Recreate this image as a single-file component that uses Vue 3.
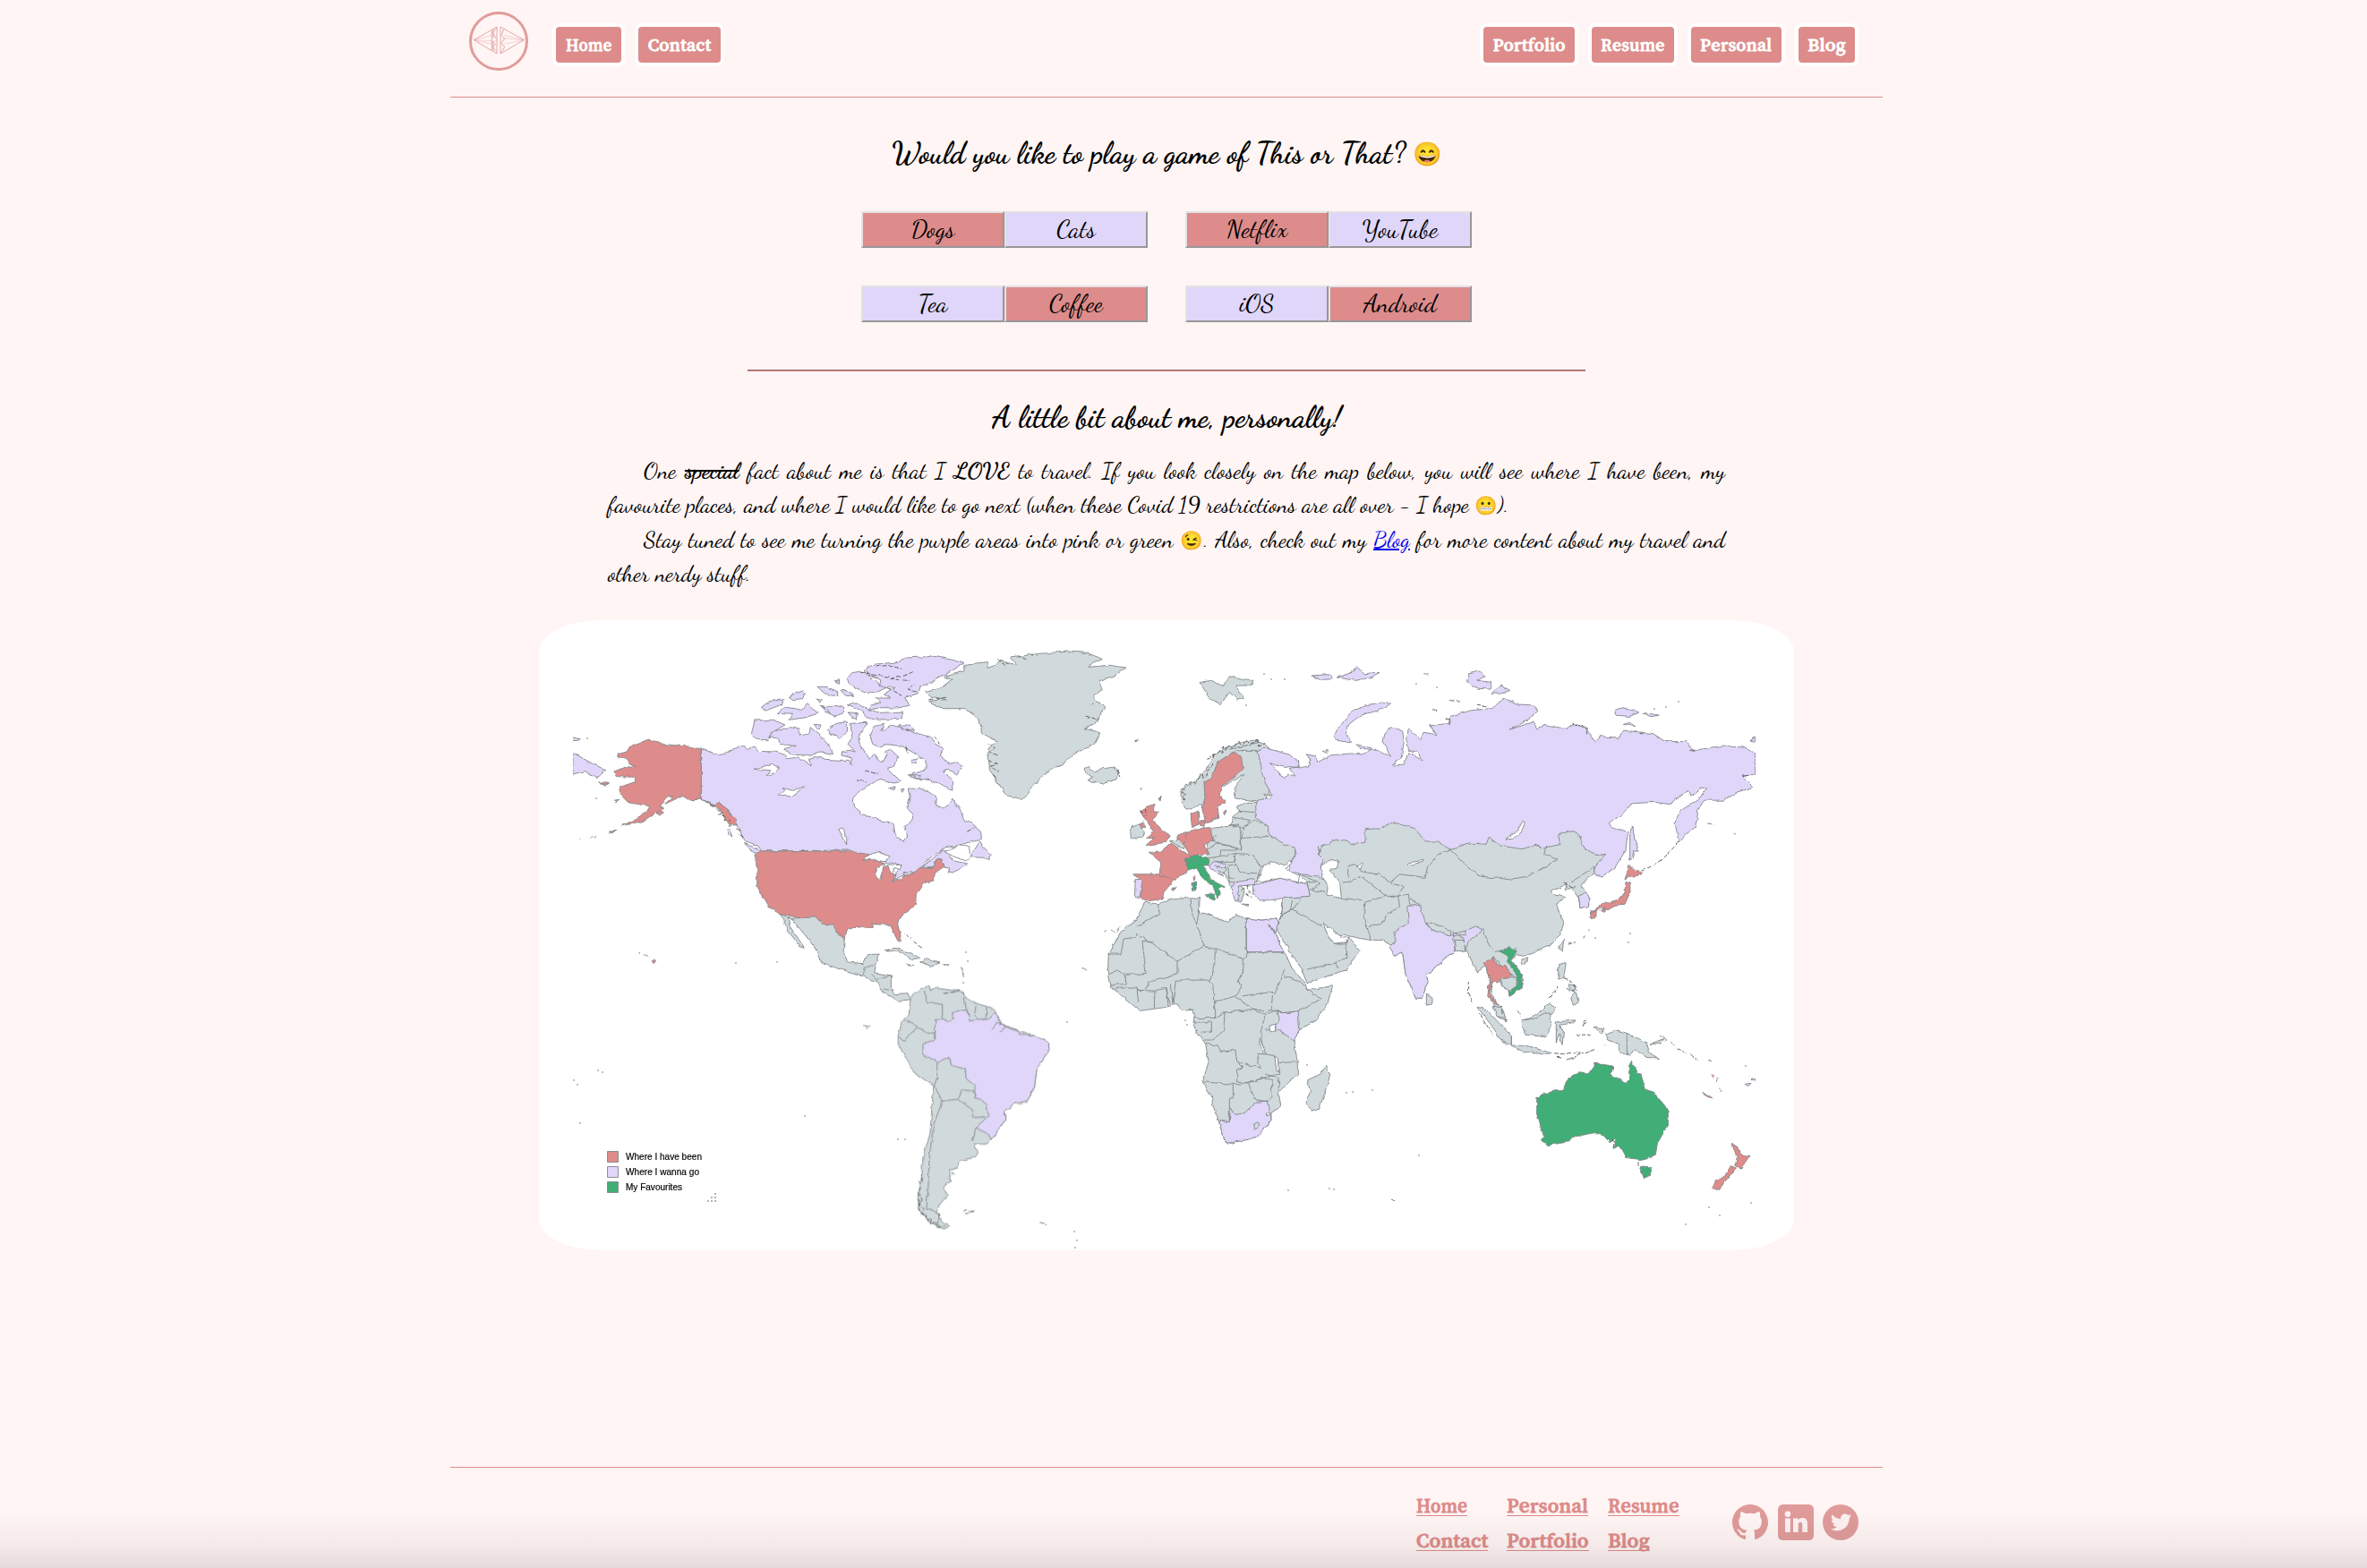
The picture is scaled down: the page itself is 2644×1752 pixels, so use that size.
<script setup>
const leftNav = [
  { label: 'Home', box: 81, text: 52 },
  { label: 'Contact', box: 100, text: 71 },
]
const rightNav = [
  { label: 'Portfolio', box: 110, text: 81 },
  { label: 'Resume', box: 100, text: 72 },
  { label: 'Personal', box: 109, text: 80 },
  { label: 'Blog', box: 71, text: 43 },
]
const choices = [
  [{ label: 'Dogs', picked: true }, { label: 'Cats' }],
  [{ label: 'Netflix', picked: true }, { label: 'YouTube' }],
  [{ label: 'Tea' }, { label: 'Coffee', picked: true }],
  [{ label: 'iOS' }, { label: 'Android', picked: true }],
]
const footerLinks = [
  [{ label: 'Home', w: 57 }, { label: 'Contact', w: 80 }],
  [{ label: 'Personal', w: 91 }, { label: 'Portfolio', w: 92 }],
  [{ label: 'Resume', w: 80 }, { label: 'Blog', w: 47 }],
]

// Condenses or widens a run of text to a set width.
const vFit = {
  mounted(el, { value }) {
    const natural = el.offsetWidth
    el.style.transform = `scaleX(${value / natural})`
    el.style.marginRight = `${value - natural}px`
  },
}

const americas = [
  ['want', 'M513 441L536 448 566 458 590 452 610 442 650 428 660 440 680 432 690 448 740 450 775 460 785 473 815 468 840 482 858 495 850 475 885 466 900 475 945 478 975 478 985 495 980 470 952 462 955 450 975 445 995 450 972 425 985 400 980 355 1033 352 1015 385 1005 400 1008 420 1020 440 1040 475 1055 455 1065 480 1085 485 1095 460 1085 450 1105 442 1128 465 1115 500 1095 505 1138 550 1115 555 1070 540 1045 555 1010 580 988 605 993 635 1010 650 1010 662 1060 670 1085 685 1115 692 1120 730 1145 750 1155 735 1148 700 1172 680 1176 660 1158 640 1165 600 1160 573 1205 575 1235 590 1250 605 1248 630 1272 642 1285 630 1298 605 1325 650 1335 680 1360 690 1388 715 1390 745 1365 750 1310 765 1275 770 1250 790 1200 835 1225 820 1265 782 1300 783 1290 800 1300 815 1345 825 1300 855 1285 852 1290 840 1275 838 1265 810 1250 808 1240 835 1195 838 1175 855 1145 862 1150 870 1110 884 1125 850 1140 830 1120 825 1090 820 1095 800 1070 785 1045 795 1010 790 985 780 703 783 690 765 650 750 635 715 620 690 600 650 570 620 555 630 513 610Z'],
  ['want', 'M1355 800L1385 750 1392 765 1420 795 1415 812 1395 802ZM648 758L690 775 703 792 680 786 655 770ZM592 708L605 708 612 735 600 730Z'],
  ['want', 'M1040 395L1050 365 1085 358 1075 380 1095 370 1110 360 1160 375 1180 385 1230 400 1240 420 1270 440 1260 460 1285 490 1320 485 1330 500 1312 528 1285 508 1270 515 1300 545 1302 580 1265 560 1230 545 1185 540 1175 525 1215 510 1215 480 1180 455 1140 430 1090 425 1075 435 1050 425ZM1130 360L1165 360 1180 378 1140 375ZM1168 475L1190 472 1188 488 1172 485ZM1160 530L1200 530 1190 542ZM1102 572L1118 566 1112 578ZM1138 576L1148 574 1142 586Z'],
  ['want', 'M680 345L740 343 775 360 735 385 720 410 690 410 670 395ZM725 400L745 380 790 368 820 372 822 395 850 390 855 368 890 400 920 440 925 458 890 450 860 462 800 460 770 440 810 430 765 425 750 405ZM865 358L888 360 882 375ZM908 375L935 355 970 350 970 385 945 405 920 390Z'],
  ['want', 'M700 305L730 280 770 275 765 292 720 310ZM753 322L775 300 830 310 845 290 860 305 880 320 840 335 790 343 800 325ZM785 265L830 245 838 255 830 272 800 275ZM876 232L905 232 940 248 940 265 900 255ZM888 295L910 300 935 292 960 300 958 322 930 330 900 315ZM950 245L970 245 990 262 965 262ZM970 290L1000 288 1020 300 1060 320 1145 315 1140 340 1060 342 1030 335 1010 310ZM975 318L1000 320 998 340 980 335ZM932 212L945 210 945 220ZM872 270L888 275 885 285Z'],
  ['want', 'M970 205L985 185 1015 180 1045 198 1060 215 1090 235 1065 250 1030 250 1000 238 975 220ZM1020 175L1055 157 1120 150 1155 135 1240 130 1290 140 1335 153 1295 180 1270 195 1235 215 1195 232 1190 255 1150 268 1165 295 1130 303 1070 302 1040 310 1045 290 1075 285 1060 270 1105 270 1085 255 1120 235 1070 230 1075 210 1040 190Z'],
  ['want', 'M112 453L165 485 215 512 185 540 150 515 112 525ZM112 402L138 407 130 412 112 413Z'],
  ['been', 'M513 441L480 433 400 425 350 408 320 422 290 433 280 450 252 458 252 468 275 470 290 490 310 502 280 500 238 517 250 533 305 535 308 550 260 568 258 590 285 620 348 632 345 650 320 670 265 698 330 683 375 652 400 640 385 632 410 598 425 600 400 625 450 600 470 612 513 610 550 630 570 640 600 697 626 695 622 675 570 620 555 630 513 610Z'],
  ['been', 'M372 655L390 645 395 658 380 664ZM192 552L225 556 215 562ZM242 612L260 610 250 617ZM225 720L250 710 235 722ZM164 737L175 735M178 738L188 735M132 742L135 742M356 1148L364 1146 370 1154 362 1160ZM335 1130L352 1137M320 1123L324 1124'],
  ['been', 'M703 783L985 783 1010 790 1040 797 1018 815 1050 808 1090 825 1062 840 1063 875 1075 880 1080 840 1100 828 1110 860 1120 865 1115 880 1150 868 1180 855 1195 838 1240 838 1250 808 1265 810 1275 838 1245 855 1240 882 1210 890 1185 935 1183 965 1130 1010 1128 1030 1140 1080 1130 1088 1112 1050 1105 1030 1045 1028 1050 1040 1000 1035 965 1050 962 1075 945 1070 925 1035 905 1038 870 1007 830 1010 785 998 760 995 725 970 705 935 688 900 688 820 680 795Z'],
  ['land', 'M760 995L800 1008 870 1005 905 1035 925 1030 945 1065 962 1075 958 1120 970 1155 1020 1160 1035 1130 1070 1128 1060 1165 1055 1190 1107 1200 1107 1240 1118 1265 1162 1262 1172 1280 1129 1285 1079 1255 1063 1220 1016 1202 985 1190 920 1170 880 1150 880 1125 850 1080 800 1015 785 1005 790 1035 835 1105 820 1100 785 1050 770 1010Z'],
  ['land', 'M1090 1115L1120 1108 1170 1125 1198 1142 1170 1145 1140 1122ZM1200 1155L1215 1145 1260 1158 1230 1168ZM1155 1163L1178 1165 1165 1168ZM1270 1163L1290 1164 1280 1166Z'],
  ['land', 'M1215 250L1260 238 1300 205 1270 200 1335 180 1335 160 1410 152 1412 170 1450 145 1500 160 1480 135 1560 122 1660 114 1719 118 1770 140 1739 150 1725 166 1790 160 1842 168 1806 195 1758 212 1766 240 1740 262 1750 285 1775 300 1758 330 1742 360 1712 372 1760 385 1742 426 1680 456 1640 495 1601 510 1554 560 1520 610 1470 597 1440 555 1415 510 1410 440 1440 415 1395 390 1380 340 1340 305 1270 305 1225 280 1280 275 1230 265Z'],
  ['land', 'M1711 505L1728 500 1742 520 1760 508 1800 502 1822 520 1815 540 1770 557 1735 552 1722 545 1740 535 1712 520Z'],
  ['sea', 'M678 508L705 500 735 490 755 505 745 520 720 530 730 512ZM755 597L775 580 770 572 800 580 840 565 820 580 795 600ZM943 710L955 705 968 740 968 762 955 735ZM1020 812L1040 795 1065 785 1100 800 1090 818 1050 812ZM1062 838L1085 825 1080 850 1070 882 1060 870ZM1100 828L1140 830 1135 845 1118 838 1115 862 1100 850ZM1108 884L1150 865 1140 878ZM1145 858L1180 850 1165 862ZM1275 785L1320 762 1350 765 1355 800 1340 815 1300 800Z'],
  ['rough', 'M562 640L578 655 570 660 590 668 585 680 604 684 598 694M620 708L640 715 632 725 652 738M1010 180L1050 192 1110 200 1150 195 1175 182M1060 165L1100 160 1140 172M1105 205L1165 212M1095 236L1140 262M1180 225L1160 240 1185 250M1025 512L1065 525M1000 546L1030 552M1345 718L1370 702M1150 432L1160 455M1240 400L1262 425M1410 425L1432 440 1415 450 1440 462M1412 480L1440 490 1418 500 1444 515M1425 530L1445 545M1440 140L1465 158M1500 128L1530 140M1540 122L1562 130M1225 275L1280 268M892 298L915 318M1150 1062L1170 1075M1175 1085L1205 1105M1740 285L1722 300M1748 340L1715 330M1815 510L1825 535'],
]

const southAmerica = [
  ['land', 'M1055 165L1080 135 1108 125 1110 140 1130 133 1190 142 1230 180 1290 200 1310 250 1360 275 1405 290 1445 315 1447 345 1412 400 1405 465 1385 510 1350 520 1322 545 1322 575 1285 635 1270 655 1235 655 1245 680 1235 700 1195 710 1190 735 1165 740 1168 780 1145 800 1162 825 1135 860 1130 885 1145 915 1165 930 1150 940 1110 920 1080 880 1075 830 1085 780 1090 700 1110 620 1120 460 1065 415 1020 320 1020 290 1030 245 1050 225Z'],
  ['want', 'M1125 238L1145 235 1162 247 1178 235 1172 212 1215 205 1222 242 1280 232 1295 212 1310 255 1360 278 1365 288 1405 290 1445 315 1447 345 1412 400 1405 465 1385 510 1350 520 1322 545 1322 575 1283 640 1275 622 1240 600 1275 560 1270 525 1255 505 1237 500 1237 460 1212 435 1210 405 1170 390 1165 365 1130 378 1090 355 1090 320 1125 303Z'],
  ['line', 'M1097 140L1100 178 1145 187 1145 235M1205 165L1210 205M1240 192L1235 225 1245 235M1270 193L1268 230M1040 240L1075 262 1100 283 1125 285M1075 262L1035 310 1022 295M1130 378L1130 430 1122 460 1145 510 1190 505M1190 505L1200 475 1232 475 1237 500M1190 505L1230 540 1230 565 1265 565M1145 510L1120 590 1108 700 1105 800 1100 870 1135 888 1135 930M1240 600L1230 645M918 92L925 60 950 60M945 85L960 105 1000 88M975 135L995 138M1285 270L1300 250 1322 262 1310 280'],
  ['rough', 'M1085 745L1088 775 1078 780 1086 800 1076 820 1088 840 1078 855 1092 875 1085 890 1100 895 1098 910 1115 905 1110 925 1130 918 1128 935 1150 930M1075 835L1084 850 1074 870 1088 885 1096 905M1205 880L1215 875 1222 882 1236 878 1222 890 1210 886M1420 918L1436 922 1438 928M1170 750L1180 755 1172 758M924 258L940 262 930 268M1150 150L1200 140 1205 165M1200 60L1205 100M1540 68L1555 72'],
]

const africa = [
  ['land', 'M175 690L225 695 250 685 335 678 358 680 355 715 390 720 455 740 480 722 515 730 570 735 615 730 622 745 612 765 595 745 645 815 670 855 715 895 720 910 805 900 790 940 750 985 695 1010 675 1035 688 1090 688 1120 625 1165 632 1200 600 1215 600 1235 550 1280 480 1290 455 1295 440 1285 425 1240 405 1200 400 1175 370 1140 390 1090 380 1045 340 1005 345 975 335 960 300 960 285 945 245 953 160 962 100 925 60 900 52 870 55 820 95 765 150 735Z'],
  ['land', 'M785 1098L797 1125 760 1210 735 1213 717 1190 730 1165 722 1135 765 1120Z'],
  ['want', 'M515 730L570 735 615 730 622 745 612 765 595 745 645 815 517 815Z'],
  ['want', 'M620 960L640 967 690 963 695 1010 675 1037 615 1003 628 985Z'],
  ['want', 'M425 1237L460 1240 463 1205 480 1222 510 1218 550 1190 585 1188 595 1220 600 1235 550 1280 480 1290 455 1295 440 1285Z'],
  ['land', 'M538 1248L555 1240 565 1248 545 1257ZM582 1217L595 1215 598 1227 585 1226Z'],
  ['line', 'M148 767L148 778 105 782 97 820 52 820M148 750L225 720 220 695M148 767L285 838 375 800 350 745 335 720 330 680M350 745L358 712M168 787L180 868 112 872M168 787L205 790M285 838L285 870 245 880 190 890 180 910M375 800L412 808 410 850 395 885 280 885 270 945M412 805L505 832 517 830 517 730M505 832L503 865 490 885 500 905 480 925 410 940 408 900 395 885M517 815L645 815M503 925L545 920 605 915 612 920 645 860M645 875L700 890 712 900M605 915L600 960 540 960 480 925M600 960L640 967 690 963 770 933 715 905M55 870L85 860 112 875 112 895 60 897M70 905L150 905 155 940M150 910L210 912 208 955M210 912L250 905 255 950M245 905L262 945M262 895L270 945M410 940L410 980 345 980M410 980L445 965 440 1010 405 1035 375 1035M445 965L540 960 580 970 565 1015 580 1070 555 1070 555 1095 570 1105 540 1100 485 1090 480 1060 430 1065 420 1048 380 1045M345 990L400 990 400 1015 365 1015M485 1090L505 1105 485 1108 485 1140 520 1145 570 1130 630 1120 610 1075 580 1070M370 1140L500 1147 575 1130 603 1135 600 1180 585 1188 550 1185 520 1145M472 1147L472 1180 460 1182 460 1240M580 1010L620 1010M625 1092L688 1090M580 1120L625 1130 625 1160M580 970L620 960'],
  ['sea', 'M590 1000L615 995 612 1012 595 1018ZM562 1030L572 1050 582 1068 578 1070 562 1048ZM612 1075L622 1080 625 1115 618 1112Z'],
]

const europe = [
  ['land', 'M128 505L155 495 175 515 170 528 130 533ZM360 140L400 135 440 150 460 125 500 130 540 135 530 148 480 148 508 178 485 182 460 165 430 195 395 180Z'],
  ['land', 'M297 410L345 388 380 360 400 330 440 305 500 290 540 285 580 295 600 310 590 440 475 430 478 400 510 370 440 400 380 440 350 450 315 458 298 440Z'],
  ['land', 'M400 505L460 500 475 475 495 462 485 450 520 440 600 440 600 500 680 550 680 575 650 605 600 590 565 605 555 635 545 640 490 640 510 660 500 690 480 685 465 650 445 620 410 605 385 595 385 560Z'],
  ['been', 'M140 620L225 620 278 632 240 665 235 682 180 688 160 678 165 640Z'],
  ['been', 'M190 565L230 565 265 542 330 575 318 615 278 632 225 625 230 590Z'],
  ['been', 'M305 525L340 507 395 503 405 535 375 548 393 570 330 575 310 550Z'],
  ['been', 'M285 525L310 515 322 515 310 545 285 535ZM330 470L355 462 358 495 335 503ZM360 488L378 485 375 500 362 498ZM440 465L450 460 443 472Z'],
  ['been', 'M400 380L420 340 470 315 500 325 505 355 470 380 435 400 430 420 450 440 420 450 425 480 380 490 368 455 378 430 375 390Z'],
  ['been', 'M160 462L185 450 208 445 205 462 220 465 205 485 235 510 260 522 250 540 180 548 205 530 185 530 205 510 190 495 175 480ZM155 495L170 490 180 500 165 505ZM222 432L232 424 228 437Z'],
  ['land', 'M262 537L290 535 310 545 308 555 290 550Z'],
  ['fav', 'M310 582L345 573 390 582 388 598 372 598 400 635 445 652 425 655 430 668 420 680 405 650 370 630 350 605 320 612ZM378 672L410 668 408 683ZM333 642L347 638 347 660 335 662Z'],
  ['been', 'M336 628L344 624 344 634 338 636ZM268 655L282 652 276 660ZM40 762L48 758M62 760L74 763M82 762L94 754'],
  ['want', 'M145 633L168 633 160 680 142 678ZM465 655L480 640 545 632 550 645 490 650 490 685 480 688ZM500 694L528 696 515 699ZM460 497L490 495 490 500ZM390 600L410 588 450 595 445 603 412 600 440 625 420 618Z'],
  ['want', 'M538 648L590 638 630 630 690 640 722 645 730 675 640 680 600 685 560 685 540 672Z'],
  ['line', 'M385 560L420 540 500 560 495 500M400 535L430 545 490 555M500 560L500 530 590 525M390 580L430 575 430 560 490 560M430 575L480 568 535 570 570 605M480 568L475 590 430 590 410 585M455 600L480 595 495 615 555 618M455 600L460 640 490 640M455 625L475 630M415 600L450 605 440 620M500 530L510 500 545 485 590 500M475 478L530 485 510 505 475 500M490 462L545 465M580 310L500 310 470 315M445 310L560 290M310 590L350 585'],
  ['rough', 'M298 405L310 408 300 415 315 420 300 428 312 433 302 440M305 402L340 388 345 393 370 372 375 380 392 360 380 365 405 345 395 350M385 330L410 322 405 330 440 300 435 315 460 298 470 305 490 288 500 298 520 285 530 295 555 285 560 300 580 292M163 408L170 405M225 430L232 426M140 288L152 286M1000 1435L1015 1440M500 660L520 648 530 665 515 670 535 680M162 458L170 470M178 455L182 470 172 475'],
]

const asia = [
  ['land', 'M760 550L820 525 915 500 1010 480 1140 520 1300 520 1565 510 1640 515 1685 572 1723 570 1685 600 1685 620 1660 630 1640 650 1655 665 1665 695 1635 705 1630 680 1610 658 1620 650 1585 660 1590 645 1540 662 1550 672 1590 678 1555 695 1565 712 1580 740 1570 770 1530 800 1480 815 1445 825 1425 822 1405 835 1430 860 1445 885 1440 905 1398 925 1395 910 1375 900 1365 890 1345 885 1335 905 1350 940 1375 955 1385 985 1365 980 1345 945 1327 925 1330 880 1318 850 1290 865 1275 845 1258 815 1240 800 1215 815 1195 820 1140 862 1120 870 1125 890 1105 930 1085 930 1050 870 1040 815 1015 820 1000 800 975 785 930 785 860 775 815 770 775 745 800 790 860 780 897 810 850 860 720 893 700 855 660 810 615 755 635 720 640 680 730 675 720 640 690 620 760 600Z'],
  ['sea', 'M765 600L800 583 825 588 820 605 795 610 820 630 830 640 835 680 785 672 790 655 770 625ZM775 745L800 755 840 780 862 778 855 790 810 793 790 775Z'],
  ['want', 'M555 313L575 303 600 308 660 320 693 340 690 355 640 352 595 342 620 360 640 380 660 370 685 375 660 357 725 350 730 335 720 320 750 325 755 340 800 322 865 318 905 320 935 308 900 305 885 295 940 305 1000 325 975 290 980 270 1003 250 1040 262 1045 290 1035 330 1005 348 1045 345 1060 315 1105 335 1090 315 1060 310 1055 280 1060 255 1100 285 1110 265 1155 270 1130 248 1195 243 1200 225 1270 210 1340 205 1380 180 1430 195 1480 197 1493 212 1460 235 1400 258 1480 238 1490 258 1515 245 1590 257 1615 243 1655 255 1685 290 1700 275 1770 278 1780 260 1880 268 1920 288 1995 288 2015 310 2100 300 2180 302 2222 317 2222 370 2180 375 2215 402 2160 415 2115 435 2050 435 2030 460 2025 500 1990 520 1965 540 1953 490 1970 462 2035 430 2060 403 2040 405 2005 425 1995 412 1950 435 1940 445 1880 440 1810 443 1775 470 1730 495 1760 510 1795 512 1788 560 1750 605 1710 625 1685 620 1685 600 1723 570 1685 572 1645 550 1630 518 1590 512 1565 520 1570 545 1510 555 1485 547 1440 557 1365 548 1330 527 1320 545 1260 542 1200 558 1160 540 1120 540 1080 505 1040 497 1010 490 965 505 915 508 915 540 880 545 820 532 790 545 760 550 757 570 778 585 765 600 775 635 755 625 700 620 665 612 660 600 680 575 683 555 645 545 590 520 590 500 550 480 548 450 555 435 585 430 600 420 585 400 570 370 565 345Z'],
  ['want', 'M808 275L840 240 870 212 910 200 990 190 998 195 960 210 900 222 860 245 850 270 872 292 820 285ZM735 123L800 120 805 132 760 133ZM820 128L870 115 890 100 910 118 960 115 945 125 885 135ZM772 312L790 308 788 318ZM1110 118L1125 119'],
  ['want', 'M1262 118L1300 112 1318 125 1290 135 1340 140 1335 157 1290 155 1255 138ZM1335 168L1370 148 1400 160 1370 168ZM1750 210L1775 203 1835 215 1800 225 1755 222ZM1848 216L1900 222 1870 226ZM1780 245L1800 240 1820 250ZM2205 285L2222 278 2222 288ZM1802 505L1812 500 1818 535 1832 560 1815 560 1810 580 1802 585ZM1630 672L1655 665 1665 680 1663 700 1635 705Z'],
  ['want', 'M1055 700L1100 697 1110 735 1130 755 1215 775 1285 750 1310 760 1260 790 1250 815 1245 780 1210 765 1215 815 1195 820 1140 862 1120 870 1125 890 1105 930 1085 930 1050 870 1040 815 1015 825 995 800 1018 790 1010 765 1060 740Z'],
  ['land', 'M1120 920L1140 930 1140 945 1120 948ZM1120 742L1140 742 1205 762 1200 775 1140 760ZM1215 768L1250 762 1252 772 1225 772ZM1216 785L1245 785 1250 812 1220 812Z'],
  ['sea', 'M575 600L600 588 645 600 660 588 668 592 650 605 695 625 690 640 630 630 565 640 555 635ZM1385 532L1425 512 1443 487 1450 490 1438 515 1405 532ZM575 420L600 422 590 432ZM1055 592L1110 585 1108 590 1060 597ZM885 600L905 590 900 605Z'],
  ['line', 'M775 545L757 570M857 600L857 640 900 625 985 675M857 640L840 640M857 600L880 595 910 615 960 620 1000 640 1030 620 1115 628 1125 600 1160 570 1200 558M985 675L1025 675 1045 650 1010 645 1000 640M1025 675L1030 700 990 720 970 745 920 750 910 720 915 690 985 675M920 750L935 785M1065 680L1100 697M1025 675L1060 670 1065 700M730 660L780 665M835 680L910 685M640 720L670 710 700 680M670 710L770 750M640 680L635 720 622 745M670 685L665 710 640 720M850 785L855 830 815 842 825 858M720 858L815 842M1200 558L1240 590 1300 625 1395 633 1460 625 1560 583 1515 570 1520 550M1310 755L1325 790 1345 815 1420 805 1405 830M1605 640L1685 600M695 620L760 640 740 660M700 640L750 640M810 795L850 795M1318 850L1345 825 1370 850 1420 880'],
]

const pacific = [
  ['been', 'M175 840L205 828 215 848 245 848 263 870 260 880 230 882 225 892 200 888 192 915 205 935 222 948 205 943 185 925 192 885ZM237 985L248 983 243 990Z'],
  ['fav', 'M225 812L260 803 283 815 263 835 295 865 303 890 298 905 258 926 256 912 285 895 283 872 250 838 255 826Z'],
  ['land', 'M230 882L260 880 283 878 282 900 258 912 235 900ZM295 835L320 828 318 840 300 846ZM422 805L440 785 436 812ZM425 845L448 842 440 880 425 880 418 860ZM465 925L480 915 490 940 475 948ZM455 895L482 900 475 915 460 908ZM148 950L175 955 240 1005 265 1025 265 1048 235 1040 200 1000ZM265 1048L320 1050 400 1068 380 1072 300 1062 265 1052ZM300 985L330 980 370 960 395 942 412 955 395 970 400 1000 380 1028 315 1022 305 1005ZM415 990L480 985 470 992 425 998 440 1010 435 1045 425 1020 415 1040ZM580 1022L620 1010 652 1018 715 1040 725 1065 760 1083 720 1078 680 1060 655 1075 630 1065 625 1045 590 1035ZM540 1003L575 1005 570 1018ZM450 1085L500 1070 460 1082ZM730 1045L780 1030 760 1045ZM205 950L235 955 245 980 215 975Z'],
  ['fav', 'M350 1180L370 1170 440 1158 450 1135 495 1115 525 1118 545 1093 605 1100 595 1120 650 1143 660 1130 658 1100 668 1087 685 1118 700 1120 712 1158 740 1165 780 1200 790 1215 790 1245 755 1290 748 1322 710 1335 650 1330 625 1300 610 1305 615 1280 595 1292 575 1275 545 1267 470 1278 455 1290 390 1298 367 1288 375 1280 350 1220ZM693 1352L733 1355 730 1375 710 1380Z'],
  ['been', 'M1003 1293L1020 1300 1035 1322 1065 1325 1035 1358 1015 1350 1020 1330ZM1000 1350L1018 1355 985 1385 960 1410 933 1405 950 1390 980 1375ZM905 1166L938 1182 925 1180ZM935 1120L942 1125 938 1130M955 1130L952 1140M962 1155L966 1165'],
  ['been', 'M660 597L680 612 700 615 680 630 660 625 645 632 650 622ZM648 640L662 640 663 665 645 695 610 698 590 710 565 705 530 718 570 693 600 690 630 680 645 665ZM528 712L550 712 548 730 532 730ZM560 712L580 705 575 715ZM505 778L512 774M522 762L528 758M1010 518L1018 520'],
  ['want', 'M1050 1145L1068 1143 1060 1150ZM1070 1135L1082 1132 1080 1138Z'],
  ['line', 'M652 1018L652 1075M265 1025L265 1048M305 985L340 982 375 968 395 968'],
  ['rough', 'M700 612L740 598 775 580 800 560 825 540M390 930L415 910 420 900M440 880L465 885 475 900 485 912M450 905L460 912 475 910M502 990L512 985 505 1000 516 990M408 1068L440 1070 480 1065 510 1068 550 1058M480 1022L530 1022M800 1040L815 1052M820 1055L850 1068M865 1070L885 1085M765 1022L785 1035 775 1042M540 1093L560 1092M600 1285L612 1290 605 1302M122 885L118 910 135 940M160 970L200 1020M0 208L20 210M45 230L62 235 55 245M60 185L90 188M150 195L190 200M470 242L520 255 515 270M865 310L880 312M695 268L715 268M1040 375L1060 372M925 490L945 497M600 1100L608 1112M440 640L470 655M415 1078L430 1080M925 1085L935 1088M575 1045L583 1048M455 793L480 790M285 960L295 975M235 970L230 950M690 1340L690 1350'],
]

const regions = [
  { at: 'translate(600 690) scale(.35714 .33333)', shapes: americas },
  { at: 'translate(600 1060) scale(.3954 .33333)', shapes: southAmerica },
  { at: 'translate(1220 700) scale(.33333 .44643)', shapes: africa },
  { at: 'translate(1220 700) scale(.33333 .44643)', shapes: europe },
  { at: 'translate(1220 700) scale(.33333 .44643)', shapes: asia },
  { at: 'translate(1600 700) scale(.33333 .44643)', shapes: pacific },
]
const islets = [
  [668, 1196], [673, 1198], [641, 1207], [645, 1212], [648, 1255], [899, 1247], [868, 1075], [1003, 1273], [1011, 1273],
  [1079, 1064], [1081, 1074], [1076, 1098], [1200, 1376], [1203, 1386], [1201, 1394], [1192, 1142],
  [1358, 934], [1370, 777], [1326, 1145], [1324, 1140], [1460, 1190], [1504, 1221], [1511, 1220], [1533, 1218],
  [1439, 1330], [1485, 1328], [1490, 1329], [1585, 1291], [1909, 1349], [1921, 1358], [1883, 1368], [1956, 1344],
  [1950, 1191], [1819, 1053], [1821, 1043], [1782, 1048], [1848, 792], [1875, 784], [1861, 790], [1630, 784],
  [666, 892], [656, 825], [822, 1076], [1420, 759], [1412, 753], [1435, 759], [1392, 788], [1582, 764], [1605, 768],
]
const resizeDots = [[799, 1334], [795, 1338], [799, 1338], [791, 1342], [795, 1342], [799, 1342]]
const legend = [
  { kind: 'been', label: 'Where I have been', w: 85 },
  { kind: 'want', label: 'Where I wanna go', w: 82 },
  { kind: 'fav', label: 'My Favourites', w: 63 },
]
</script>

<template>
  <div class="page">
    <header class="header">
      <svg class="logo" viewBox="72 39 198 198" fill="none">
        <circle cx="171" cy="138" r="94.5" stroke-width="9" />
        <g stroke-width="2.6">
          <path d="M88 134L165 90V180ZM256 134L177 90V180Z" />
          <path d="M148 100V168M153 98V128M153 140V172M150 112L164 94M153 112L163 130M149 138L160 148 151 158 164 172" />
          <path d="M188 97L181 118 191 130 180 143 191 158 180 176" />
        </g>
        <path stroke-width="1.2" d="M88 134L150 118M88 134L150 148M88 134L164 138M256 134L190 118M256 134L190 148M256 134L184 128" />
      </svg>
      <nav class="nav">
        <a v-for="n in leftNav" :key="n.label" class="nav-btn" :style="{ width: n.box + 'px' }"><span v-fit="n.text" class="fit">{{ n.label }}</span></a>
      </nav>
      <nav class="nav right">
        <a v-for="n in rightNav" :key="n.label" class="nav-btn" :style="{ width: n.box + 'px' }"><span v-fit="n.text" class="fit">{{ n.label }}</span></a>
      </nav>
    </header>

    <main class="main">
      <h2 class="title game-title">
        <span v-fit="574" class="fit">Would you like to play a game of This or That?</span>
        <span class="emoji big">😄</span>
      </h2>

      <div class="choices">
        <div v-for="(pair, i) in choices" :key="i" class="pair">
          <button v-for="c in pair" :key="c.label" class="choice" :class="{ picked: c.picked }">{{ c.label }}</button>
        </div>
      </div>

      <hr class="rule" />

      <h2 class="title about-title"><span v-fit="391" class="fit">A little bit about me, personally!</span></h2>

      <div class="story">
        <div class="row indent spread">One <b><s>special</s></b> fact about me is that I <b>LOVE</b> to travel. If you look closely on the map below, you will see where I have been, my</div>
        <div class="row">favourite places, and where I would like to go next (when these Covid 19 restrictions are all over - I hope <span class="emoji">😬</span>).</div>
        <div class="row indent spread">Stay tuned to see me turning the purple areas into pink or green <span class="emoji">😉</span>. Also, check out my <a class="link">Blog</a> for more content about my travel and</div>
        <div class="row">other nerdy stuff.</div>
      </div>

      <div class="map-card">
        <svg class="map" viewBox="602 693 1402 704">
          <defs>
            <filter id="coast" filterUnits="userSpaceOnUse" x="602" y="693" width="1402" height="704">
              <feTurbulence type="fractalNoise" baseFrequency=".13" numOctaves="2" seed="4" />
              <feDisplacementMap in="SourceGraphic" scale="4" xChannelSelector="R" yChannelSelector="G" />
            </filter>
            <clipPath id="extent"><rect x="640" y="700" width="1321" height="697" /></clipPath>
          </defs>
          <g clip-path="url(#extent)">
            <g filter="url(#coast)">
              <g v-for="(r, i) in regions" :key="i" :transform="r.at">
                <path v-for="(s, j) in r.shapes" :key="j" :class="s[0]" :d="s[1]" />
              </g>
            </g>
          </g>
          <circle v-for="(p, i) in islets" :key="'i' + i" class="islet" :cx="p[0]" :cy="p[1]" r=".9" />
          <rect v-for="(p, i) in resizeDots" :key="'d' + i" :x="p[0] - 1" :y="p[1] - 1" width="2" height="2" fill="#b5b5ad" />
          <g v-for="(l, i) in legend" :key="l.kind">
            <rect :class="l.kind" x="678.5" :y="1286.5 + i * 17" width="12" height="12" />
            <text class="legend-text" x="699" :y="1295.5 + i * 17" :textLength="l.w" lengthAdjust="spacingAndGlyphs">{{ l.label }}</text>
          </g>
        </svg>
      </div>
    </main>

    <footer class="footer">
      <div v-for="(col, i) in footerLinks" :key="i" class="col">
        <a v-for="l in col" :key="l.label" class="foot-link"><span v-fit="l.w" class="fit under">{{ l.label }}</span></a>
      </div>
      <div class="social">
        <svg viewBox="0 0 16 16"><path d="M8 0C3.58 0 0 3.58 0 8c0 3.54 2.29 6.53 5.47 7.59.4.07.55-.17.55-.38 0-.19-.01-.82-.01-1.49-2.01.37-2.53-.49-2.69-.94-.09-.23-.48-.94-.82-1.13-.28-.15-.68-.52-.01-.53.63-.01 1.08.58 1.23.82.72 1.21 1.87.87 2.33.66.07-.52.28-.87.51-1.07-1.78-.2-3.64-.89-3.64-3.95 0-.87.31-1.59.82-2.15-.08-.2-.36-1.02.08-2.12 0 0 .67-.21 2.2.82.64-.18 1.32-.27 2-.27.68 0 1.36.09 2 .27 1.53-1.04 2.2-.82 2.2-.82.44 1.1.16 1.92.08 2.12.51.56.82 1.27.82 2.15 0 3.07-1.87 3.75-3.65 3.95.29.25.54.73.54 1.48 0 1.07-.01 1.93-.01 2.2 0 .21.15.46.55.38A8.013 8.013 0 0016 8c0-4.42-3.58-8-8-8z" /></svg>
        <svg viewBox="0 0 40 40"><rect width="40" height="40" rx="5.5" /><path class="cut" d="M8 15.500H13.800V31H8ZM17 15.500H22.500V17.700C23.500 16.200 25.200 15.100 27.600 15.100 31.600 15.100 33 17.800 33 21.800V31H27.200V22.800C27.200 20.800 26.500 19.700 25 19.700 23.400 19.700 22.700 21 22.700 22.800V31H17Z" /><circle class="cut" cx="10.9" cy="10.8" r="3.3" /></svg>
        <svg viewBox="0 0 40 40"><circle cx="20" cy="20" r="20" /><path class="cut" transform="translate(8.8 8.3) scale(.0455)" d="M459.37 151.716c.325 4.548.325 9.097.325 13.645 0 138.72-105.583 298.558-298.558 298.558-59.452 0-114.68-17.219-161.137-47.106 8.447.974 16.568 1.299 25.34 1.299 49.055 0 94.213-16.568 130.274-44.832-46.132-.975-84.792-31.188-98.112-72.772 6.498.974 12.995 1.624 19.818 1.624 9.421 0 18.843-1.3 27.614-3.573-48.081-9.747-84.143-51.98-84.143-102.985v-1.299c13.969 7.797 30.214 12.67 47.431 13.319-28.264-18.843-46.781-51.005-46.781-87.391 0-19.492 5.197-37.36 14.294-52.954 51.655 63.675 129.3 105.258 216.365 109.807-1.624-7.797-2.599-15.918-2.599-24.04 0-57.828 46.782-104.934 104.934-104.934 30.213 0 57.502 12.67 76.67 33.137 23.715-4.548 46.456-13.32 66.599-25.34-7.798 24.366-24.366 44.833-46.132 57.827 21.117-2.273 41.584-8.122 60.426-16.243-14.292 20.791-32.161 39.308-52.628 54.253z" /></svg>
      </div>
    </footer>
    <div class="fade"></div>
  </div>
</template>

<style>
html, body { margin: 0; background: #fff5f4; }
</style>

<style scoped>
* { box-sizing: border-box; }
.page { position: relative; height: 1752px; padding-left: 503px; display: flex; flex-direction: column; overflow: hidden; background: #fff5f4; }
.fit { display: inline-block; white-space: nowrap; transform-origin: 0 50%; }
.header { width: 1600px; height: 109px; flex: none; display: flex; align-items: flex-start; padding: 13px 27px 0 21px; border-bottom: 1px solid #dd8c8b; }
.logo { width: 66px; height: 66px; stroke: #e09c9b; }
.nav { display: flex; gap: 11px; margin: 13px 0 0 27px; }
.nav.right { margin-left: auto; }
.nav-btn { height: 48px; border: 4px solid #fff; border-radius: 8px; background: #dd8c8b; color: #fff; display: flex; justify-content: center; font: bold 21px/40px "Song Myung", "Liberation Serif", serif; }
.main { width: 1600px; flex: none; height: 1530px; display: flex; flex-direction: column; align-items: center; font-family: "Dancing Script", "Liberation Serif", serif; color: #000; }
.title { margin: 0; display: flex; align-items: center; font-size: 34px; font-weight: 700; line-height: 40px; }
.game-title { margin-top: 43px; height: 40px; gap: 8px; }
.emoji { font-family: "Noto Color Emoji", "Dancing Script", sans-serif; font-size: 20.5px; line-height: 1; font-weight: 400; }
.emoji.big { font-size: 26px; }
.choices { margin-top: 44px; display: grid; grid-template-columns: 320px 320px; gap: 42px; }
.pair { display: flex; }
.choice { width: 160px; height: 41px; padding: 0; border: 2px solid; border-color: #e3e2e4 #979797 #979797 #e3e2e4; background: #dfd6f9; color: #000; font: 28px/35px "Dancing Script", "Liberation Serif", serif; }
.choice.picked { background: #dd8c8b; }
.rule { width: 936px; height: 2px; margin: 53px 0 0; border: 0; border-top: 1px solid #8c5c62; background: #dd8c8b; }
.about-title { margin-top: 32px; height: 40px; }
.story { width: 1248px; margin-top: 20px; font-size: 25.6px; }
.row { height: 38.4px; line-height: 38.4px; white-space: nowrap; }
.indent { padding-left: 40px; }
.spread { text-align: justify; text-align-last: justify; white-space: normal; }
.link { color: #00e; text-decoration: underline; }
.map-card { width: 1402px; height: 704px; margin-top: 32px; border-radius: 5%; background: #fff; overflow: hidden; }
.map { display: block; width: 1402px; height: 704px; }
.map path, .map rect[class] { stroke: #82868a; stroke-width: .9px; vector-effect: non-scaling-stroke; stroke-linejoin: round; }
.land { fill: #d0d9db; }
.been { fill: #dd8c8b; }
.want { fill: #dfd6f9; }
.fav { fill: #41ae76; }
.sea { fill: #fff; }
.map path.line { fill: none; }
.map path.rough { fill: none; stroke: #555; stroke-dasharray: 5 2; }
.islet { fill: #a3a3a3; }
.legend-text { font: 10.5px "Liberation Sans", Arial, sans-serif; fill: #000; stroke: #000; stroke-width: .2px; }
.footer { width: 1600px; height: 113px; flex: none; border-top: 1px solid #dd8c8b; display: flex; justify-content: flex-end; padding: 30px 27px 0 0; }
.col { display: flex; flex-direction: column; }
.col:nth-child(1) { width: 101px; }
.col:nth-child(2) { width: 113px; }
.col:nth-child(3) { width: 139px; }
.foot-link { height: 39px; color: #dd8c8b; font: bold 23px/24px "Song Myung", "Liberation Serif", serif; }
.under { height: 24px; border-bottom: 1px solid #dd8c8b; }
.social { display: flex; gap: 10.5px; margin-top: 11px; }
.social svg { width: 40px; height: 40px; fill: #df9b9a; }
.social .cut { fill: #fdf2f1; }
.fade { position: absolute; left: 0; right: 0; bottom: 0; height: 66px; background: linear-gradient(rgba(60, 40, 40, 0), rgba(60, 40, 40, .05) 60%, rgba(60, 40, 40, .13)); pointer-events: none; }
</style>
